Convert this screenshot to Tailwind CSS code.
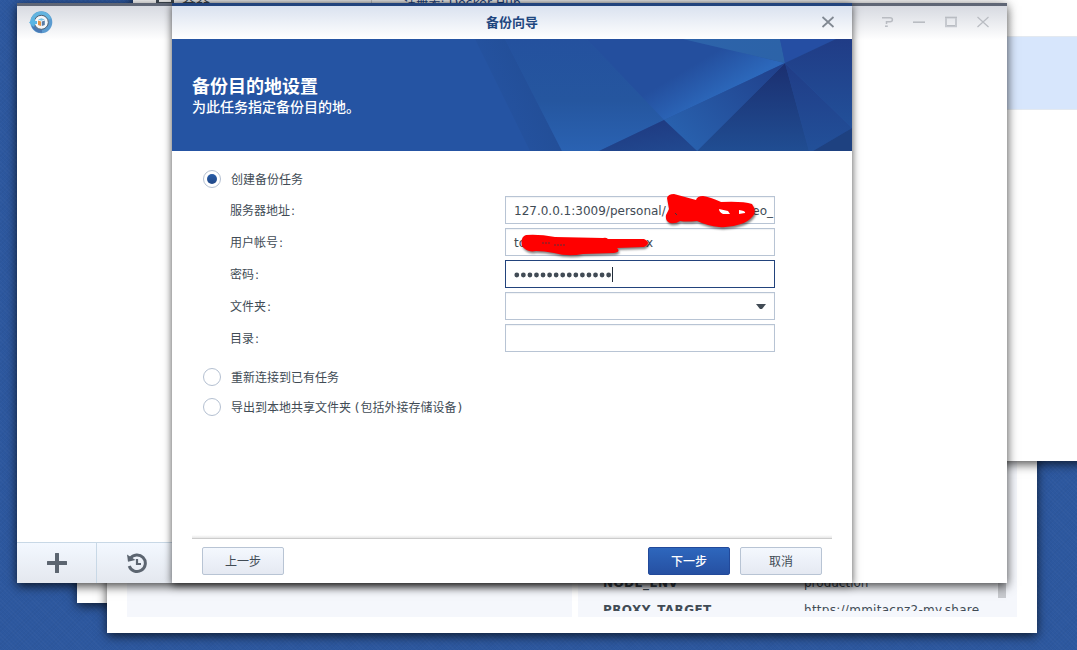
<!DOCTYPE html>
<html lang="zh-CN">
<head>
<meta charset="utf-8">
<title>备份向导</title>
<script src="https://cdn.jsdelivr.net/npm/@tailwindcss/browser@4"></script>
</head>
<body class="relative w-[1077px] h-[650px] overflow-hidden bg-[#2d589f] font-['DejaVu_Sans','Noto_Sans_CJK_SC',sans-serif] text-[12px] text-[#414b55]">
<!-- desktop texture -->
<div class="absolute inset-0 bg-[repeating-linear-gradient(45deg,rgba(255,255,255,0.02)_0_1px,transparent_1px_3px),repeating-linear-gradient(-45deg,rgba(0,0,0,0.025)_0_1px,transparent_1px_3px)]"></div>

<!-- background windows -->
<div class="absolute left-[77px] top-[300px] w-[600px] h-[303px] bg-white shadow-[0_3px_10px_rgba(0,0,0,0.7)]"></div>
<div class="absolute left-[107px] top-[300px] w-[930px] h-[333px] bg-white shadow-[0_3px_10px_rgba(0,0,0,0.7)] flex gap-[6px] pl-5 pr-5 pb-4">
  <div class="w-[445px] bg-[#f5f7fc]"></div>
  <div class="relative flex-1 bg-[#f5f7fc] overflow-hidden">
    <div class="h-[311px] pl-[25px] overflow-hidden flex flex-col justify-end">
      <div class="h-[36px] overflow-hidden">
        <div class="flex h-[27px] leading-[16px]"><b class="w-[201px] tracking-[0.4px]">NODE_ENV</b><span>production</span></div>
        <div class="flex h-[28px] leading-[16px]"><b class="w-[201px] tracking-[0.4px]">PROXY_TARGET</b><span class="tracking-[0.27px]">https://mmitacnz2-my.share</span></div>
      </div>
    </div>
    <div class="absolute right-[11px] top-[100px] w-2 h-[198px] bg-[#c8cacf]"></div>
  </div>
</div>
<div class="absolute left-[133px] top-[-20px] w-[980px] h-[481px] bg-white shadow-[0_3px_10px_rgba(0,0,0,0.7)]">
  <div class="h-[56px] bg-linear-to-r from-[#f5f5f5] from-80% to-white to-90% flex">
    <div class="w-[239px] border-r border-[#ccc] flex pl-[22px] pt-[12px] gap-[7px] text-[14px] leading-4">
      <svg class="w-5 h-4" viewBox="0 0 20 16"><path d="M1 0H19V14H1Z M4 8H16V10H4Z" fill="#414b55" fill-rule="evenodd"/></svg>
      <span>容器</span>
    </div>
    <span class="pl-[32px] pt-[15px] leading-4 tracking-[0.2px] text-[#1f4583]">注册表: Docker Hub</span>
  </div>
  <div class="h-[74px] bg-[#d7e6fc] border-y border-[#e3e9f0]"></div>
</div>

<!-- backup application window -->
<div class="absolute left-[17px] top-[3px] w-[990px] h-[580px] bg-white border-t-[3px] border-[#5f6675] shadow-[0_3px_10px_rgba(0,0,0,0.75)] flex flex-col">
  <div class="h-[34px] bg-linear-to-b from-[#d7dae1] to-white flex justify-between pl-[12px] pr-[17px]">
    <svg class="w-6 h-6 mt-[4px]" viewBox="0 0 24 24">
      <circle cx="12.3" cy="12.3" r="9" fill="#f5f7fa" stroke="#5b9bd0" stroke-width="4"/>
      <path d="M3.2 12A9 9 0 0 1 12 3.2Q18 3 20.5 9" fill="none" stroke="#62b4df" stroke-width="3.5"/>
      <path d="M4 16Q7 21.5 13 21.3" fill="none" stroke="#4979b4" stroke-width="3"/>
      <circle cx="12.3" cy="12.3" r="7" fill="none" stroke="#52606f" stroke-width="1"/>
      <path d="M0 12.5 5.5 7.5 6 11H8V14H6L5 17Z" fill="#5ab5e4"/>
      <path d="M9 9.5 12.4 8.3 15.8 9.5 12.4 10.7Z" fill="#7bc6e8"/>
      <path d="M9 10.6 12 11.6V16L9 15Z" fill="#e39245"/><path d="M12.8 11.6 15.8 10.6V15L12.8 16Z" fill="#597ca5"/>
    </svg>
    <svg class="w-[110px] h-3 mt-[10px]" viewBox="0 0 110 12" fill="none" stroke="#b9bcc2" stroke-width="1.2">
      <path d="M2 1.8H10Q12.400 1.8 12.400 3.8T10 5.8H6.500V8" stroke-width="1.500"/><path d="M5 10.200H7.800" stroke-width="1.500"/>
      <path d="M33 6.2H45" stroke-width="1.6"/>
      <path d="M66 1.500H76V10.200H66Z" stroke="#c6c9cf" stroke-width="2"/><path d="M65 1.500H77M67 9.500H75" stroke-width="1"/>
      <path d="M97.500 1 108.500 11M108.500 1 97.500 11"/>
    </svg>
  </div>
  <div class="flex-1"></div>
  <div class="h-[41px] w-[240px] flex border-t border-[#c8d8e6] bg-linear-to-b from-[#f3f8ff] to-[#e4e8ef]">
    <div class="w-20 border-r border-[#c8d8e6] flex items-center justify-center">
      <svg class="w-5 h-5" viewBox="0 0 20 20"><path d="M8 0.500Q8 0 8.500 0H11.500Q12 0 12 .5V8H19.500Q20 8 20 8.500V11.500Q20 12 19.500 12H12V19.500Q12 20 11.500 20H8.500Q8 20 8 19.500V12H.5Q0 12 0 11.500V8.500Q0 8 .5 8H8Z" fill="#5c6570"/></svg>
    </div>
    <div class="w-20 flex items-center justify-center">
      <svg class="w-[22px] h-[22px]" viewBox="0 0 22 22" fill="none" stroke="#5c6570"><path d="M4.200 6.500A8.300 8.300 0 1 1 3.200 14" stroke-width="3"/><path d="M1 2.500 2 9.800 9.500 8Z" fill="#5c6570" stroke="none"/><path d="M11 7V12H15" stroke-width="2.200"/></svg>
    </div>
  </div>
</div>

<!-- wizard dialog -->
<div class="absolute left-[172px] top-[3px] w-[680px] h-[580px] bg-white border-t-[3px] border-[#22437c] shadow-[0_2px_8px_rgba(0,0,0,0.7)] flex flex-col">
  <div class="h-[33px] shrink-0 bg-linear-to-b from-[#dae2ef] to-white flex items-center pr-[17px]">
    <div class="flex-1 pl-[31px] text-center font-bold text-[13px] leading-5 text-[#1f4780]">备份向导</div>
    <svg class="w-[14px] h-3 -mt-px" viewBox="0 0 14 12"><path d="M1.500 1 12.500 11M12.500 1 1.500 11" stroke="#808892" stroke-width="1.700"/></svg>
  </div>
  <div class="relative h-28 shrink-0 bg-[#2554a3] text-white">
    <svg class="absolute inset-0 w-[680px] h-28" viewBox="172 39 680 112">
      <defs>
        <linearGradient id="fold" x1="480" y1="115" x2="533" y2="92" gradientUnits="userSpaceOnUse"><stop offset="0" stop-color="#2554a3"/><stop offset="1" stop-color="#234f99"/></linearGradient>
        <linearGradient id="wide" x1="0" y1="0" x2="0" y2="1"><stop offset="0" stop-color="#24519e"/><stop offset=".55" stop-color="#25569f"/><stop offset="1" stop-color="#2a62b2"/></linearGradient>
        <linearGradient id="mid" x1="685" y1="70" x2="706" y2="105" gradientUnits="userSpaceOnUse"><stop offset="0" stop-color="#244f9e"/><stop offset="1" stop-color="#2c68bb"/></linearGradient>
        <linearGradient id="teal" x1="0" y1="0" x2="1" y2="0"><stop offset="0" stop-color="#2d63aa"/><stop offset="1" stop-color="#2c63a8"/></linearGradient>
        <linearGradient id="dark" x1="0" y1="0" x2="0" y2="1"><stop offset="0" stop-color="#1b2f70"/><stop offset="1" stop-color="#204d92"/></linearGradient>
        <linearGradient id="right" x1="0" y1="0" x2="0" y2="1"><stop offset="0" stop-color="#203c86"/><stop offset="1" stop-color="#225099"/></linearGradient>
        <linearGradient id="wedge" x1="785" y1="63" x2="697" y2="151" gradientUnits="userSpaceOnUse"><stop offset="0" stop-color="#203f8a"/><stop offset="1" stop-color="#2860ad"/></linearGradient>
        <linearGradient id="low" x1="660" y1="120" x2="665" y2="152" gradientUnits="userSpaceOnUse"><stop offset="0" stop-color="#1f3b82"/><stop offset="1" stop-color="#21488f"/></linearGradient>
      </defs>
      <path d="M475 39H505L562 151H530Z" fill="url(#fold)"/>
      <path d="M505 39H590L664 120 599 151H562Z" fill="url(#wide)"/>
      <path d="M587 39H683L785 63 664 120Z" fill="url(#mid)"/>
      <path d="M683 39H780L785 63Z" fill="url(#teal)"/>
      <path d="M780 39H836L785 63Z" fill="#254ea3"/>
      <path d="M836 39H852V128L785 63Z" fill="url(#right)"/>
      <path d="M785 63 852 128 813 151H809Z" fill="url(#right)"/>
      <path d="M852 128V151H813Z" fill="#1e4180"/>
      <path d="M785 63 809 151H697Z" fill="url(#dark)"/>
      <path d="M785 63 697 151 664 120Z" fill="url(#wedge)"/>
      <path d="M664 120 697 151H599Z" fill="url(#low)"/>
    </svg>
    <div class="relative pl-5 pt-[37px]">
      <div class="text-[18px] leading-[22px] font-bold">备份目的地设置</div>
      <div class="text-[14px] leading-[19px] font-medium">为此任务指定备份目的地。</div>
    </div>
  </div>
  <div class="relative flex-1 pl-[31px] pt-[19px]">
    <label class="flex items-center gap-[10px] h-[18px]"><i class="size-[18px] rounded-full border border-[#b4c0d1] flex items-center justify-center"><i class="size-[10px] rounded-full bg-linear-to-b from-[#285da8] to-[#204787]"></i></i><span class="pt-px">创建备份任务</span></label>
    <div class="pl-[27px] pt-[8px] flex flex-col gap-1">
      <div class="flex h-7 items-center"><span class="w-[275px] pt-px">服务器地址<span class="pl-px">:</span></span><div class="w-[270px] h-7 border border-[#b8c4d4] px-2 leading-[28px] whitespace-nowrap shadow-[inset_0_1px_1px_#f1f3f6]"><div class="w-[260px] -mr-2 flex justify-between"><span>127.0.0.1:3009/personal/</span><span class="pr-[1px]">eo_</span></div></div></div>
      <div class="flex h-7 items-center"><span class="w-[275px] pt-px">用户帐号<span class="pl-px">:</span></span><div class="w-[270px] h-7 border border-[#b8c4d4] px-2 leading-[28px] shadow-[inset_0_1px_1px_#f1f3f6]"><div class="w-[139px] flex justify-between"><span>to</span><span>x</span></div></div></div>
      <div class="flex h-7 items-center"><span class="w-[275px] pt-px">密码<span class="pl-px">:</span></span><div class="w-[270px] h-7 border border-[#22437c] pl-[8px] flex items-center">
        <svg class="w-[99px] h-4" viewBox="0 0 99 16"><path d="M2.800 9H97" stroke="#414b55" stroke-width="4.800" stroke-linecap="round" stroke-dasharray="0 6.560"/><path d="M98.500 1V16" stroke="#222d3a"/></svg></div></div>
      <div class="flex h-7 items-center"><span class="w-[275px] pt-px">文件夹<span class="pl-px">:</span></span><div class="w-[270px] h-7 border border-[#b8c4d4] pr-[8px] flex items-center justify-end shadow-[inset_0_1px_1px_#f1f3f6]"><svg class="w-[10px] h-[5px] mt-[1px]" viewBox="0 0 10 5"><path d="M0 0H10L6 5H4Z" fill="#414b55"/></svg></div></div>
      <div class="flex h-7 items-center"><span class="w-[275px] pt-px">目录<span class="pl-px">:</span></span><div class="w-[270px] h-7 border border-[#b8c4d4] shadow-[inset_0_1px_1px_#f1f3f6]"></div></div>
    </div>
    <label class="flex items-center gap-[10px] h-[18px] mt-4"><i class="size-[18px] rounded-full border border-[#b4c0d1]"></i><span class="pt-px">重新连接到已有任务</span></label>
    <label class="flex items-center gap-[10px] h-[18px] mt-3"><i class="size-[18px] rounded-full border border-[#b4c0d1]"></i><span class="pt-px">导出到本地共享文件夹 (<span class="pl-px">包括外接存储设备</span><span class="pl-px">)</span></span></label>
    <!-- marker strokes hiding the account details -->
    <svg class="absolute left-[318px] top-[29px] w-[300px] h-[90px] drop-shadow-[1px_2px_1px_rgba(0,0,0,0.5)]" viewBox="0 0 300 90">
      <path d="M227 27H240V35H227ZM247 29H257V35H247Z" fill="#fff"/>
      <g fill="#f00">
      <path fill-rule="evenodd" d="M177 18Q178 14 184 14L206 20Q207 16 213 16Q220 17 231 22Q253 21 262 24Q267 31 263 36Q258 42 251 44Q240 48 229 47Q218 46 207 41Q196 42 190 41Q186 44 180 43Q175 41 176 35L179 29ZM240 34 238 31 229 29Q229 32 233 34ZM249 30Q256 31 255 33L249 34Z"/>
      <path d="M36 55Q49 54 65 57L113 58Q116 57 118 59H154Q162 63 154 67L127 68Q131 72 124 73L93 74Q78 77 64 73Q54 71 46 71Q37 73 32 66Q30 57 36 55Z"/>
      </g>
      <g fill="none" stroke="#333b44" stroke-width="1"><path d="M185 33 187 35"/><path d="M52 63H61M64 65H76" stroke-dasharray="2 1" stroke-width=".8"/></g>
    </svg>
  </div>
  <div class="mx-5 h-1 bg-linear-to-b from-white to-[#e6e6e6] border-b border-[#ccc]"></div>
  <div class="h-11 shrink-0 px-[30px] pt-[8px] flex gap-[10px]">
    <button class="w-[82px] h-7 pt-[2px] rounded-[2px] border border-[#b8c4d4] bg-linear-to-b from-[#f4f8fe] to-[#e5e9f2]">上一步</button>
    <span class="flex-1"></span>
    <button class="w-[82px] h-7 pt-[2px] rounded-[2px] border border-[#22499a] bg-linear-to-b from-[#2e67bd] to-[#2650a2] text-white font-medium">下一步</button>
    <button class="w-[82px] h-7 pt-[2px] rounded-[2px] border border-[#b8c4d4] bg-linear-to-b from-[#f4f8fe] to-[#e5e9f2]">取消</button>
  </div>
</div>
</body>
</html>
